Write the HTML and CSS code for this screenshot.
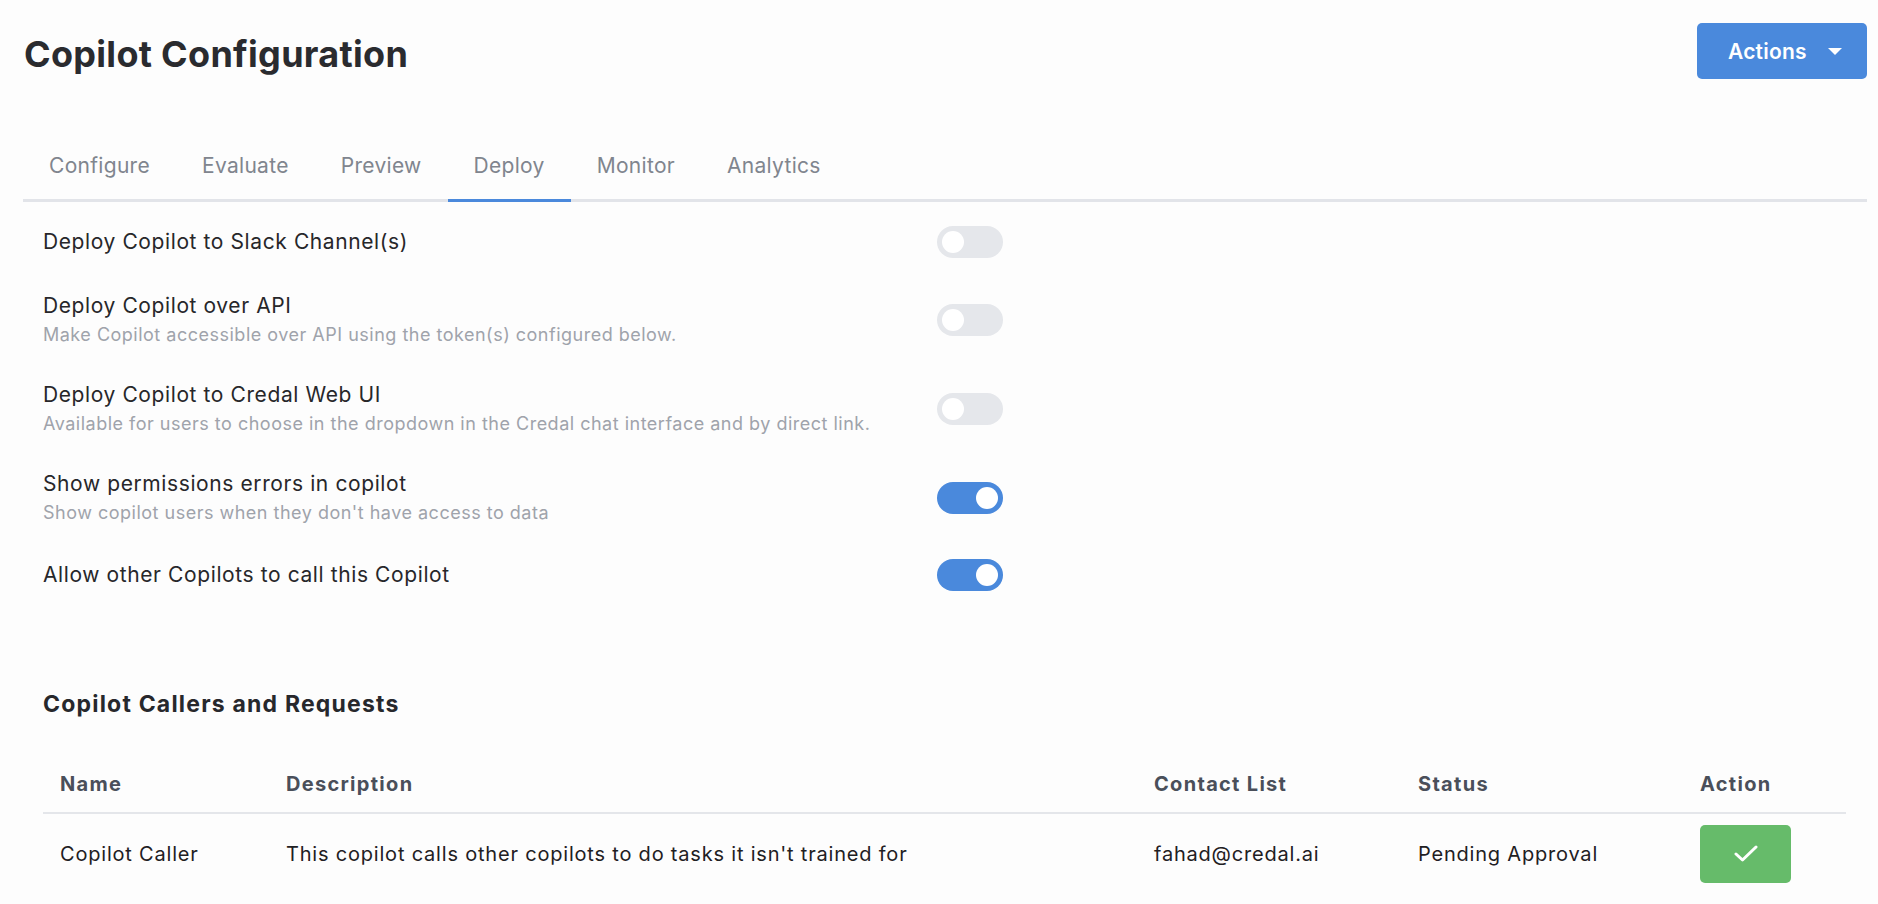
FILE: index.html
```html
<!DOCTYPE html>
<html lang="en">
<head>
<meta charset="utf-8">
<title>Copilot Configuration</title>
<link rel="stylesheet" href="styles.css">
</head>
<body>
<div class="page">
  <header class="top">
    <h1 class="title">Copilot Configuration</h1>
    <button class="actions">Actions <span class="caret"></span></button>
  </header>

  <nav class="tabs">
    <div class="tab">Configure</div>
    <div class="tab">Evaluate</div>
    <div class="tab">Preview</div>
    <div class="tab active">Deploy</div>
    <div class="tab">Monitor</div>
    <div class="tab">Analytics</div>
  </nav>

  <section class="settings">
    <div class="row">
      <div class="text"><div class="label">Deploy Copilot to Slack Channel(s)</div></div>
      <span class="switch"><span class="knob"></span></span>
    </div>
    <div class="row">
      <div class="text">
        <div class="label">Deploy Copilot over API</div>
        <div class="sub">Make Copilot accessible over API using the token(s) configured below.</div>
      </div>
      <span class="switch"><span class="knob"></span></span>
    </div>
    <div class="row">
      <div class="text">
        <div class="label">Deploy Copilot to Credal Web UI</div>
        <div class="sub">Available for users to choose in the dropdown in the Credal chat interface and by direct link.</div>
      </div>
      <span class="switch"><span class="knob"></span></span>
    </div>
    <div class="row">
      <div class="text">
        <div class="label">Show permissions errors in copilot</div>
        <div class="sub">Show copilot users when they don't have access to data</div>
      </div>
      <span class="switch on"><span class="knob"></span></span>
    </div>
    <div class="row">
      <div class="text"><div class="label">Allow other Copilots to call this Copilot</div></div>
      <span class="switch on"><span class="knob"></span></span>
    </div>
  </section>

  <section class="callers">
    <h2 class="section-title">Copilot Callers and Requests</h2>
    <table class="table">
      <colgroup>
        <col class="c-name"><col class="c-desc"><col class="c-contact"><col class="c-status"><col class="c-action">
      </colgroup>
      <thead>
        <tr><th>Name</th><th>Description</th><th>Contact List</th><th>Status</th><th>Action</th></tr>
      </thead>
      <tbody>
        <tr>
          <td>Copilot Caller</td>
          <td>This copilot calls other copilots to do tasks it isn't trained for</td>
          <td>fahad@credal.ai</td>
          <td>Pending Approval</td>
          <td><button class="approve" aria-label="Approve"><svg width="24" height="18" viewBox="0 0 24 18"><polyline points="2,9 8.5,15 22,2" fill="none" stroke="#fff" stroke-width="3" stroke-linecap="round" stroke-linejoin="round"/></svg></button></td>
        </tr>
      </tbody>
    </table>
  </section>
</div>
</body>
</html>
```

FILE: styles.css
```css
* { box-sizing: border-box; }
html, body { margin: 0; padding: 0; background: #fdfdfd; }
body {
  font-family: Inter, "Noto Sans", "Liberation Sans", sans-serif;
  color: #27282c;
}
.page { padding: 23px 11px 0 23px; }

.top { display: flex; justify-content: space-between; align-items: flex-start; }
.title {
  margin: 9px 0 0 1px;
  font-size: 36px;
  line-height: 44px;
  font-weight: 700;
  color: #2a2b2f;
  letter-spacing: 0.3px;
}
.actions {
  display: flex; align-items: center;
  height: 56px; width: 170px;
  padding: 0 24px 0 31px;
  border: none; border-radius: 5px;
  background: #4a89dc; color: #fff;
  font-family: inherit; font-size: 21px; font-weight: 600;
  letter-spacing: 0.2px;
  gap: 21px;
}
.caret {
  width: 0; height: 0;
  border-left: 7.5px solid transparent;
  border-right: 7.5px solid transparent;
  border-top: 7px solid #fff;
}

.tabs {
  display: flex;
  margin-top: 54px;
  border-bottom: 3px solid #e2e4e9;
}
.tab {
  padding: 18px 26px 18px 26px;
  margin-bottom: -3px;
  border-bottom: 3px solid transparent;
  font-size: 21px; line-height: 30px;
  letter-spacing: 0.3px;
  color: #80858e;
}
.tab.active { border-bottom-color: #4a89dc; }

.settings {
  display: flex; flex-direction: column; gap: 34px;
  width: 980px;
  padding-left: 20px;
  margin-top: 24px;
}
.row { display: flex; align-items: center; justify-content: space-between; }
.label { font-size: 21px; line-height: 28px; letter-spacing: 0.6px; color: #27272a; }
.sub { margin-top: 3px; font-size: 18px; line-height: 24px; letter-spacing: 0.5px; color: #9fa3ab; }

.switch {
  position: relative;
  flex: none;
  width: 66px; height: 32px;
  border-radius: 16px;
  background: #e5e7eb;
}
.switch .knob {
  position: absolute; top: 5px; left: 5px;
  width: 22px; height: 22px; border-radius: 50%;
  background: #fff;
}
.switch.on { background: #4a89dc; }
.switch.on .knob { left: 39px; }

.callers { padding-left: 20px; margin-top: 98px; }
.section-title {
  margin: 0;
  font-size: 23px; line-height: 30px; font-weight: 700;
  letter-spacing: 1.2px;
  color: #27282c;
}
.table {
  margin-top: 36px;
  width: 1803px;
  border-collapse: collapse;
  table-layout: fixed;
}
.c-name { width: 226px; }
.c-desc { width: 868px; }
.c-contact { width: 264px; }
.c-status { width: 282px; }
.c-action { width: 163px; }
.table th {
  text-align: left;
  padding: 16px 17px 15px;
  font-size: 20px; line-height: 26px; font-weight: 700;
  letter-spacing: 1.3px;
  color: #4a4f5a;
  border-bottom: 2px solid #e4e6ea;
}
.table td {
  padding: 11px 17px;
  font-size: 20px; line-height: 26px;
  letter-spacing: 0.8px;
  color: #1f2023;
  vertical-align: middle;
}
.approve {
  display: flex; align-items: center; justify-content: center;
  width: 91px; height: 58px;
  border: none; border-radius: 5px;
  background: #66bb6a;
  padding: 0;
}
```
